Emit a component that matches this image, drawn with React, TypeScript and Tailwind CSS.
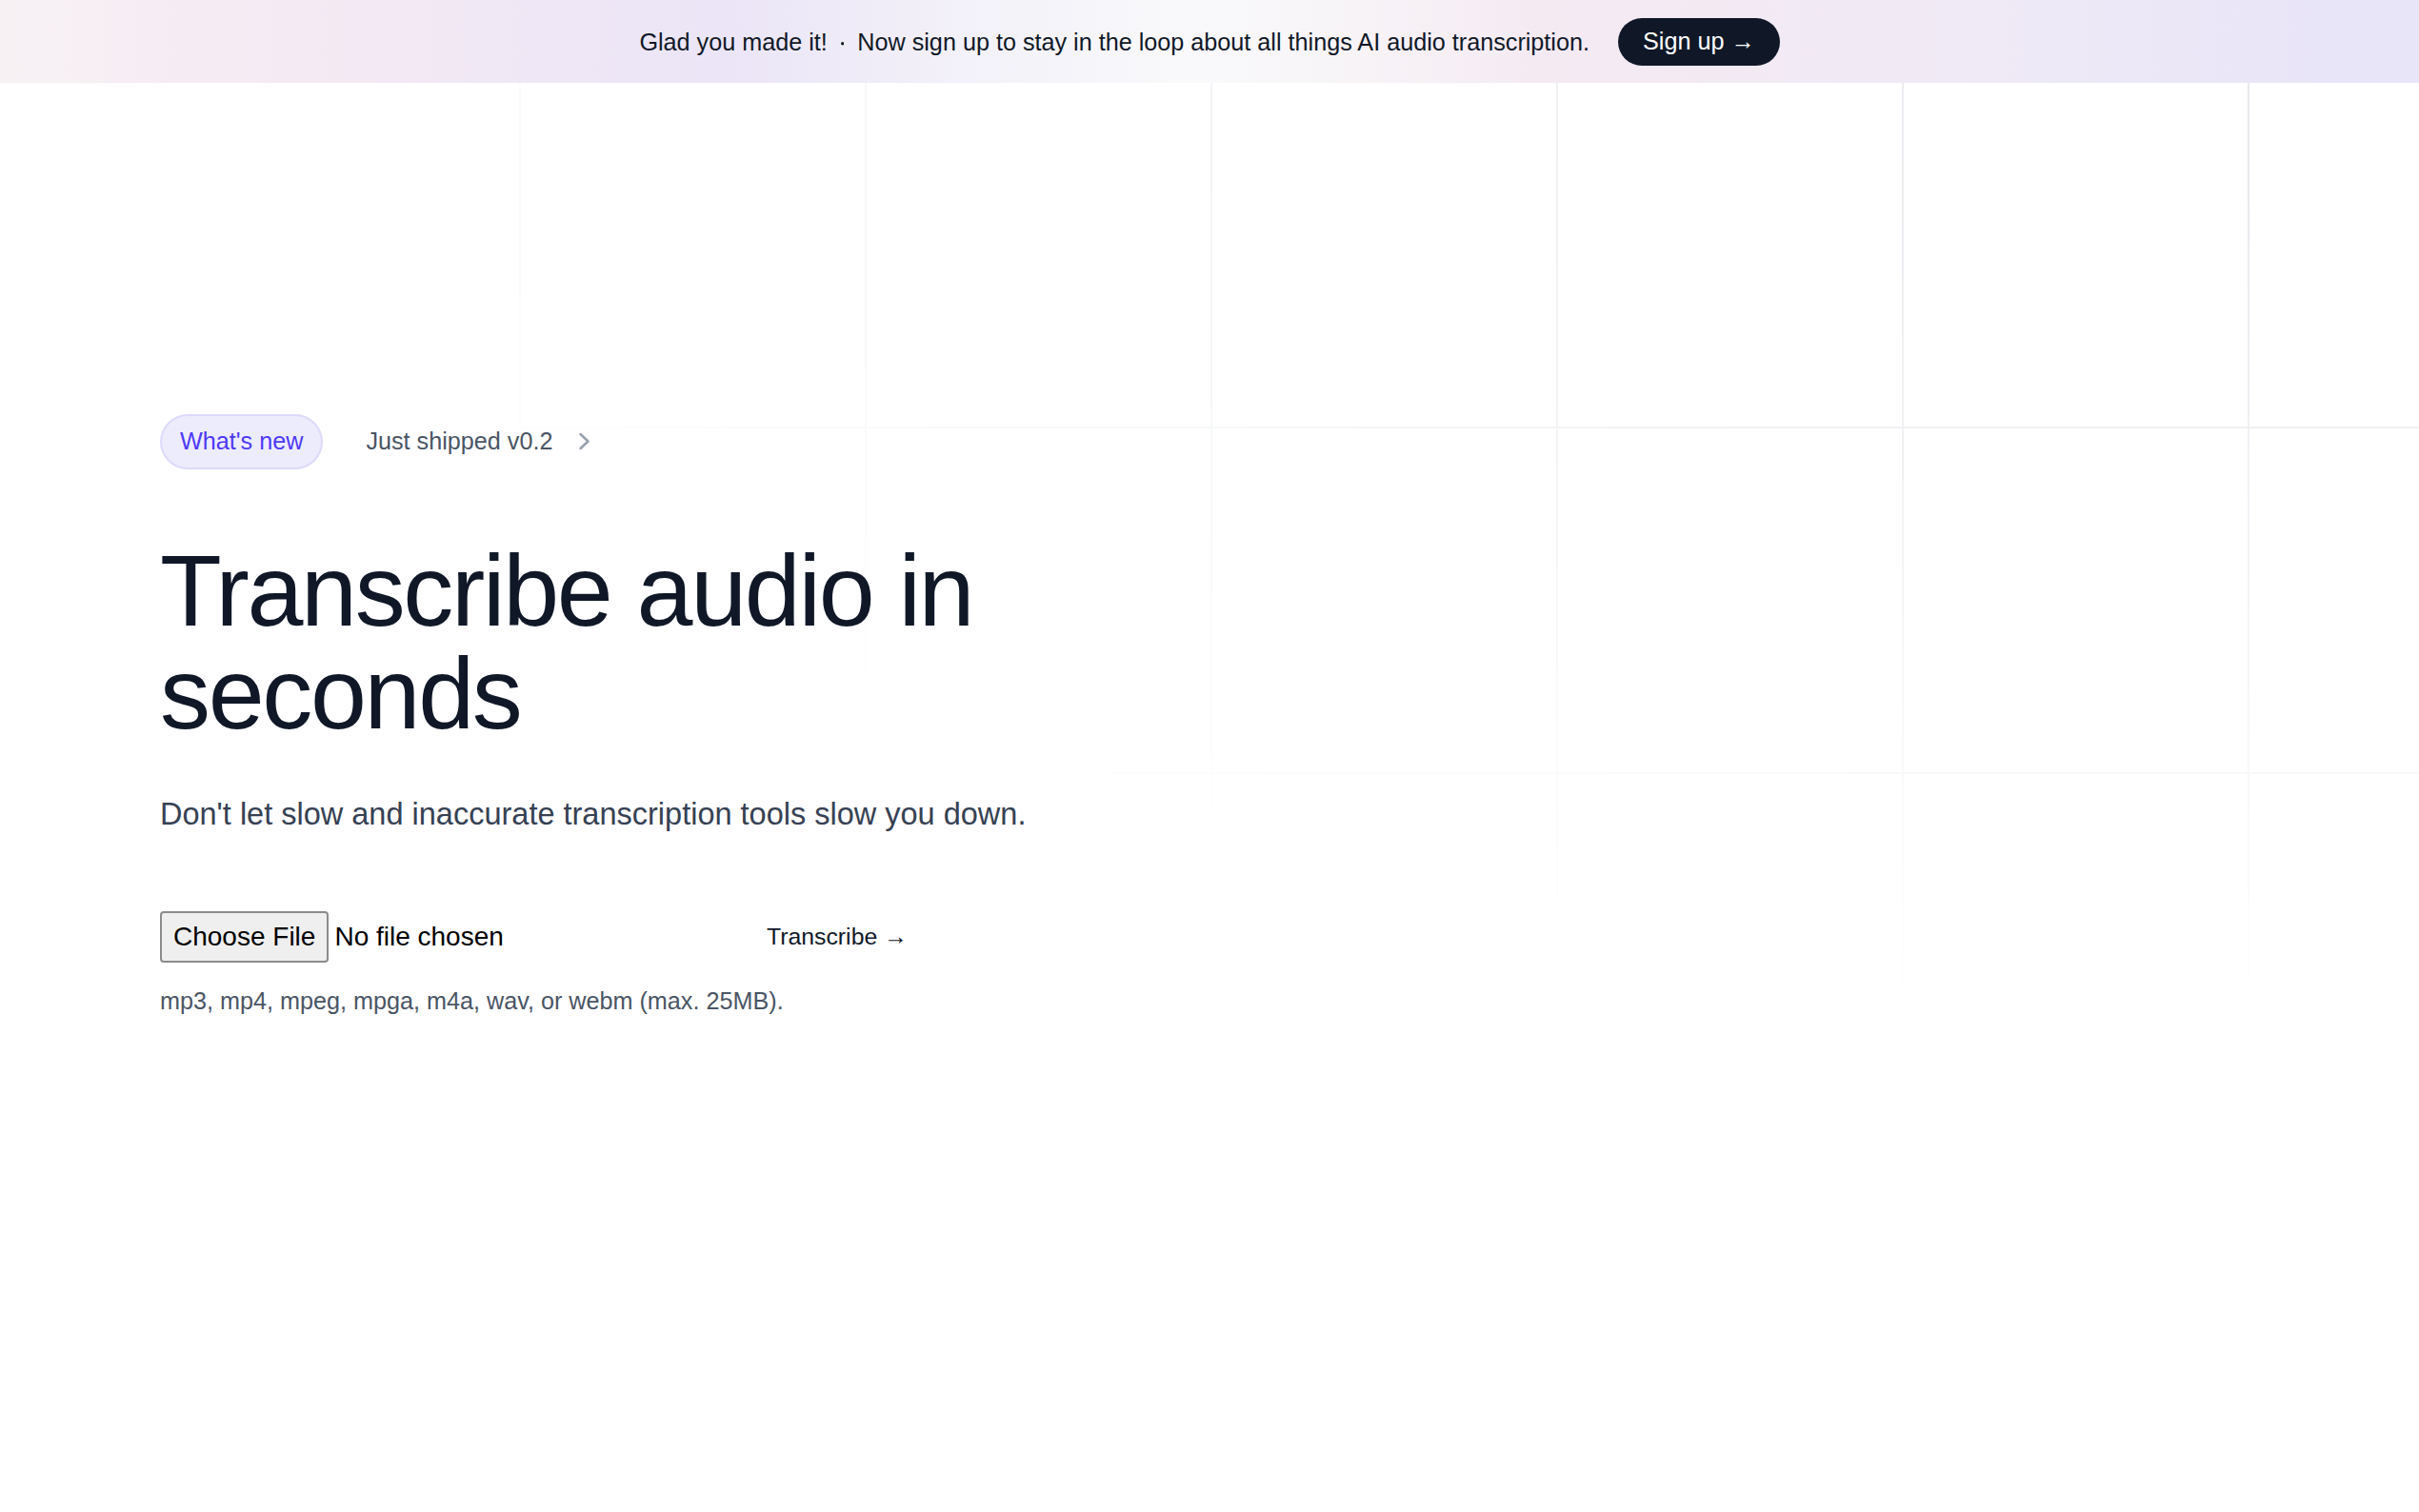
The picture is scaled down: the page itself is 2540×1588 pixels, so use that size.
import React from 'react';

const ChevronRight = () => (
  <svg viewBox="0 0 20 20" fill="currentColor" className="h-[35px] w-[35px] text-gray-400" aria-hidden="true">
    <path
      fillRule="evenodd"
      clipRule="evenodd"
      d="M7.21 14.77a.75.75 0 01.02-1.06L11.168 10 7.23 6.29a.75.75 0 111.04-1.08l4.5 4.25a.75.75 0 010 1.08l-4.5 4.25a.75.75 0 01-1.06-.02z"
    />
  </svg>
);

// faint square grid that fades out from the top right corner
const GridBackground = () => (
  <svg
    className="absolute inset-0 -z-10 h-full w-full stroke-gray-200 [mask-image:radial-gradient(2300px_1000px_at_top_right,white,transparent)]"
    aria-hidden="true"
  >
    <defs>
      <pattern id="hero-grid" width="363" height="363" x="182" y="-2" patternUnits="userSpaceOnUse">
        <path d="M1 363V1H363" fill="none" strokeWidth="2" />
      </pattern>
    </defs>
    <rect width="100%" height="100%" strokeWidth="0" fill="url(#hero-grid)" />
  </svg>
);

const Banner = () => (
  <div className="flex h-[87px] items-center justify-center bg-[linear-gradient(90deg,#f7f1f4_0%,#f5ecf3_8%,#f1e8f4_18%,#ebe5f7_30%,#f3f1f9_40%,#f9f9fb_49%,#f8f5f8_55%,#f4eaf2_64%,#f2eaf4_74%,#eee9f6_84%,#e9e5f8_96%)]">
    <p className="text-[25.2px] leading-[42px] text-gray-900">
      Glad you made it!
      <svg viewBox="0 0 2 2" className="mx-[14px] inline h-[3.5px] w-[3.5px] fill-current" aria-hidden="true">
        <circle cx="1" cy="1" r="1" />
      </svg>
      Now sign up to stay in the loop about all things AI audio transcription.
    </p>
    <a
      href="#"
      className="ml-[30px] flex h-[50px] items-center rounded-full bg-gray-900 px-[26px] text-[25.2px] text-white"
    >
      Sign up <span aria-hidden="true" className="ml-[7px]">→</span>
    </a>
  </div>
);

const App = (): JSX.Element => {
  return (
    <div className="flex min-h-screen flex-col bg-white font-['Liberation_Sans',Arial,sans-serif] text-gray-900">
      <Banner />
      <section className="relative isolate flex-1">
        <GridBackground />
        <div className="pl-[168px] pt-[348px]">
          <div className="flex items-center gap-x-[45px]">
            <span className="flex h-[58px] items-center rounded-full bg-[#edecfc] px-[21px] text-[25.2px] text-indigo-600 ring-2 ring-inset ring-indigo-600/10">
              What's new
            </span>
            <span className="inline-flex items-center gap-x-[16px] text-[25.2px] text-gray-600">
              <span>Just shipped v0.2</span>
              <ChevronRight />
            </span>
          </div>

          <h1 className="mt-[73px] max-w-[1020px] text-[106px] leading-[108px] tracking-[-0.022em] text-gray-900">
            Transcribe audio in seconds
          </h1>
          <p className="mt-[45px] text-[32.5px] leading-[57px] text-gray-700">
            Don't let slow and inaccurate transcription tools slow you down.
          </p>

          <form className="mt-[73px] flex items-center gap-x-[42px]" onSubmit={(e) => e.preventDefault()}>
            <input
              type="file"
              name="file"
              className="h-[54px] w-[595px] text-[28px] text-black file:mr-[6px] file:h-[54px] file:rounded-[4px] file:border-2 file:border-solid file:border-[#8c8c8c] file:bg-[#efefef] file:px-[12px] file:text-[28px] file:text-black"
            />
            <button type="submit" className="text-[24.8px] leading-[42px] text-gray-900">
              Transcribe <span aria-hidden="true">→</span>
            </button>
          </form>
          <p className="mt-[23px] text-[25.2px] leading-[35px] text-gray-600">
            mp3, mp4, mpeg, mpga, m4a, wav, or webm (max. 25MB).
          </p>
        </div>
      </section>
    </div>
  );
};

export default App;
